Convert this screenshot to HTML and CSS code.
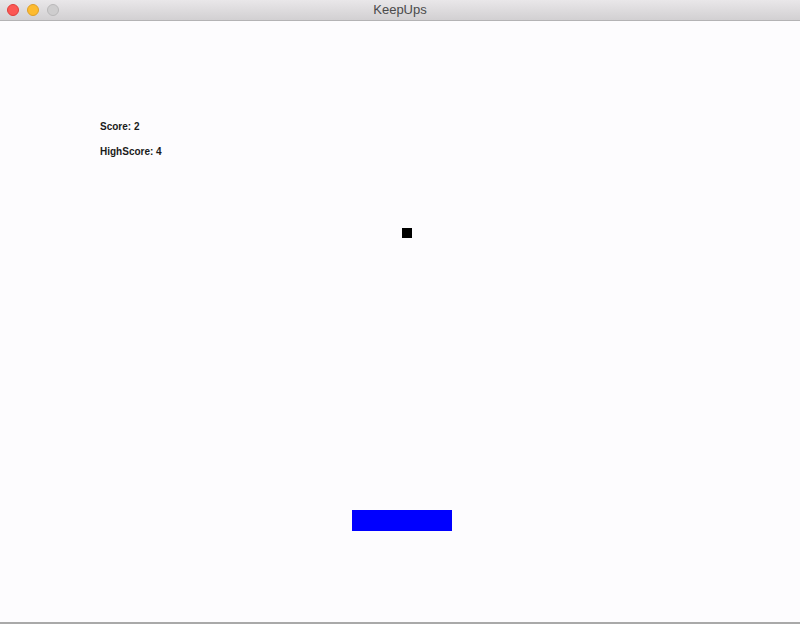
FILE: index.html
```html
<!DOCTYPE html>
<html>
<head>
<meta charset="utf-8">
<link rel="stylesheet" href="styles.css">
</head>
<body>
<div class="window">
  <div class="titlebar">
    <div class="lights">
      <span class="light red"></span>
      <span class="light yellow"></span>
      <span class="light gray"></span>
    </div>
    <div class="title">KeepUps</div>
  </div>
  <div class="canvas">
    <div class="hud">
      <div class="hud-line">Score: 2</div>
      <div class="hud-line">HighScore: 4</div>
    </div>
    <div class="ball"></div>
    <div class="paddle"></div>
  </div>
</div>
</body>
</html>
```
FILE: styles.css
```css
html, body {
  margin: 0;
  padding: 0;
  background: #fdfcfe;
}
.window {
  width: 800px;
  height: 624px;
  display: flex;
  flex-direction: column;
  overflow: hidden;
}
.titlebar {
  position: relative;
  height: 20px;
  border-bottom: 1px solid #b4b3b5;
  background: linear-gradient(to bottom, #e9e7e9, #d2d0d2);
  display: flex;
  align-items: center;
  justify-content: center;
  flex: none;
}
.lights {
  position: absolute;
  left: 7px;
  top: 4px;
  display: flex;
  gap: 8px;
}
.light {
  width: 12px;
  height: 12px;
  border-radius: 50%;
  box-sizing: border-box;
}
.red { background: #fc5753; border: 1px solid #df3e3a; }
.yellow { background: #fdbb2f; border: 1px solid #de9f27; }
.gray { background: #cecdce; border: 1px solid #b9b8b9; }
.title {
  font-family: "Helvetica Neue", "Liberation Sans", Arial, sans-serif;
  font-size: 13px;
  color: #4a4a4a;
  line-height: 20px;
}
.canvas {
  position: relative;
  height: 601px;
  background: #fdfcfe;
  border-bottom: 2px solid #a9a9a9;
  flex: none;
}
.hud {
  padding: 100px 0 0 100px;
  font-family: "Liberation Sans", Arial, sans-serif;
  font-weight: bold;
  font-size: 10px;
  line-height: 12px;
  color: #1a1a1a;
  display: flex;
  flex-direction: column;
  gap: 13px;
}
.ball {
  position: absolute;
  left: 402px;
  top: 207px;
  width: 10px;
  height: 10px;
  background: #000;
}
.paddle {
  position: absolute;
  left: 352px;
  top: 489px;
  width: 100px;
  height: 21px;
  background: #0000ff;
}
```
